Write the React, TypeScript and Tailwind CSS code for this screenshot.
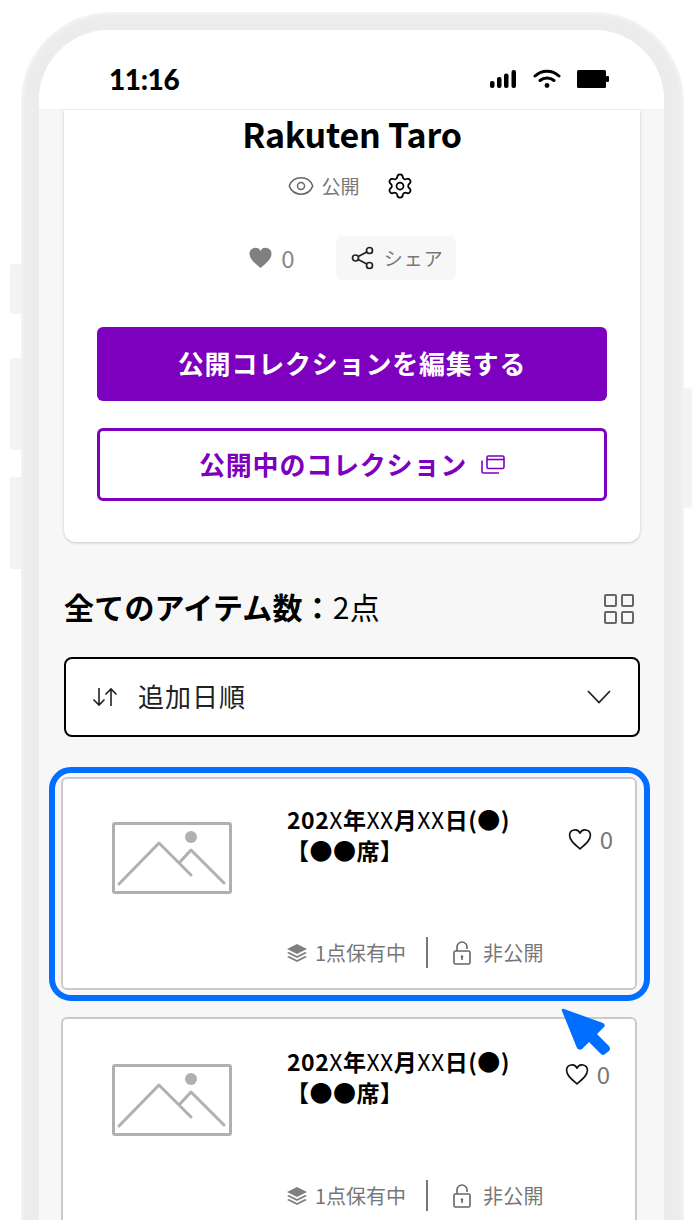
import { Eye, Settings } from "lucide-react";

const FONT = "font-['Noto_Sans_CJK_JP','Noto_Sans',sans-serif]";

const ImagePlaceholder = () => (
  <svg width="120" height="72" viewBox="0 0 120 72" fill="none" stroke="#b0b0b0" strokeWidth="3">
    <rect x="1.5" y="1.5" width="117" height="69" rx="1.5" />
    <path d="M7 62 L47 21 L79 53 M67 41 L79 28 L112 61" strokeLinecap="round" strokeLinejoin="round" />
    <circle cx="79" cy="15" r="6" fill="#b0b0b0" stroke="none" />
  </svg>
);

const StackIcon = () => (
  <svg width="20" height="18" viewBox="0 0 20 18" fill="#808080">
    <path d="M10 0 L20 5 L10 10 L0 5 Z" />
    <path d="M2 8 L10 12 L18 8 L20 9 L10 14 L0 9 Z" />
    <path d="M2 12 L10 16 L18 12 L20 13 L10 18 L0 13 Z" />
  </svg>
);

const LockIcon = () => (
  <svg width="18" height="24" viewBox="0 0 18 24" fill="none" stroke="#666" strokeWidth="1.6">
    <rect x="1" y="10" width="16" height="13" rx="1.5" />
    <path d="M4 10 V6 a5 5 0 0 1 10 0 V8" />
    <circle cx="9" cy="15.5" r="1.2" fill="#666" stroke="none" />
    <path d="M9 16 V19" />
  </svg>
);

const ItemTitle = () => (
  <p className="text-[23px] leading-[31px] font-bold text-black tracking-[0.5px]">
    202<span className="font-normal">X</span>年<span className="font-normal">XX</span>月
    <span className="font-normal">XX</span>日(●)
    <br />
    <span className="-ml-[1px]">【●●席】</span>
  </p>
);

const ItemCard = ({ second = false }: { second?: boolean }) => (
  <div className="h-[213px] rounded-[6px] border-2 border-[#cacaca] bg-white flex shrink-0">
    <div className={`w-[224px] pl-[49px] shrink-0 ${second ? "pt-[45px]" : "pt-[43px]"}`}>
      <ImagePlaceholder />
    </div>
    <div className={`flex-1 flex flex-col ${second ? "pt-[27px]" : "pt-[25px]"}`}>
      <div className="flex justify-between">
        <ItemTitle />
        <div className={`flex items-center gap-[7px] h-[28px] ${second ? "mr-[25px] mt-[14px]" : "mr-[22px] mt-[21px]"}`}>
          <svg width="26" height="25" viewBox="0 0 24 24" fill="none" stroke="#111" strokeWidth="1.6">
            <path d="M12 21 C6 16 2 12.5 2 8 a5.2 5.2 0 0 1 10 -2 a5.2 5.2 0 0 1 10 2 C22 12.5 18 16 12 21 Z" strokeLinejoin="round" />
          </svg>
          <span className="text-[24px] text-[#777]">0</span>
        </div>
      </div>
      <div className={`flex items-center text-[20px] text-[#777] ${second ? "mt-[72px]" : "mt-[71px]"}`}>
        <StackIcon />
        <span className="ml-[8px]">1点保有中</span>
        <span className="ml-[20px] w-[2px] h-[31px] bg-[#777]" />
        <span className="ml-[25px]">
          <LockIcon />
        </span>
        <span className="ml-[12px] tracking-[0.2px]">非公開</span>
      </div>
    </div>
  </div>
);

export default function App() {
  return (
    <div className={`${FONT} relative h-[1220px] w-[700px] overflow-hidden bg-white`}>
      {/* side buttons */}
      <div className="absolute left-[10px] top-[264px] h-[50px] w-[11px] rounded-l-[3px] bg-[#f3f3f3]" />
      <div className="absolute left-[10px] top-[358px] h-[92px] w-[11px] rounded-l-[3px] bg-[#f3f3f3]" />
      <div className="absolute left-[10px] top-[477px] h-[92px] w-[11px] rounded-l-[3px] bg-[#f3f3f3]" />
      <div className="absolute left-[684px] top-[388px] h-[120px] w-[8px] rounded-r-[3px] bg-[#f3f3f3]" />

      {/* phone */}
      <div className="ml-[21px] mt-[12px] w-[663px] h-[1300px] rounded-t-[90px] bg-[#ececec] shadow-[inset_0_0_6px_rgba(255,255,255,0.9)] pl-[18px] pr-[20px] pt-[18px]">
        <div className="h-full rounded-t-[70px] overflow-hidden bg-[#f7f7f7] flex flex-col">
          {/* status bar */}
          <div className="h-[80px] shrink-0 bg-white border-b border-[#f2f2f2] flex items-start justify-between pl-[70px] pr-[55px] pt-[35px]">
            <span className="font-['Lato',sans-serif] font-black text-[28px] leading-[28px] tracking-[-0.4px] text-black">11:16</span>
            <div className="flex items-center gap-[16px] pt-[4px]">
              <svg width="27" height="18" viewBox="0 0 27 18" fill="#000">
                <rect x="0" y="11" width="4.5" height="7" rx="2" />
                <rect x="7" y="7" width="4.5" height="11" rx="2" />
                <rect x="14" y="3.5" width="4.5" height="14.5" rx="2" />
                <rect x="21.5" y="0" width="4.5" height="18" rx="2" />
              </svg>
              <svg width="28" height="19" viewBox="0 0 28 19" fill="none" stroke="#000" strokeWidth="3" strokeLinecap="round">
                <path d="M2 7 C9 0.5 19 0.5 26 7" />
                <path d="M7 11.5 C11 8 17 8 21 11.5" />
                <circle cx="14" cy="16.5" r="2.4" fill="#000" stroke="none" />
              </svg>
              <svg width="32" height="18" viewBox="0 0 32 18" fill="#000">
                <rect x="0" y="0" width="29" height="18" rx="1.5" />
                <rect x="29" y="6" width="3" height="6" rx="1" />
              </svg>
            </div>
          </div>

          {/* content */}
          <div className="px-[25px] flex flex-col">
            <div className="w-[576px] h-[432px] shrink-0 bg-white rounded-b-[12px] shadow-[0_1px_3px_rgba(0,0,0,0.2)] flex flex-col items-center">
              <h1 className="text-[34px] leading-[48px] font-bold text-black tracking-[-0.2px]">Rakuten Taro</h1>
              <div className="flex items-center mt-[9px] -ml-[3px] h-[38px] text-[#777]">
                <Eye size={28} strokeWidth={1.3} className="text-[#666]" />
                <span className="ml-[6px] text-[19px]">公開</span>
                <Settings size={28} strokeWidth={1.5} className="ml-[26px] text-black" />
              </div>
              <div className="flex items-center mt-[31px] h-[44px]">
                <svg width="25" height="24" viewBox="0 0 24 24" fill="#808080">
                  <path d="M12 22 C6 17 1 13 1 7.5 a5.8 5.8 0 0 1 11 -2.5 a5.8 5.8 0 0 1 11 2.5 C23 13 18 17 12 22 Z" />
                </svg>
                <span className="ml-[8px] text-[24px] text-[#888]">0</span>
                <div className="ml-[41px] w-[120px] h-[44px] rounded-[6px] bg-[#f7f7f7] flex items-center pl-[15px]">
                  <svg width="23" height="24" viewBox="0 0 23 24" fill="none" stroke="#222" strokeWidth="1.7">
                    <circle cx="4.5" cy="12" r="3" />
                    <circle cx="18.5" cy="4.5" r="3" />
                    <circle cx="18.5" cy="19.5" r="3" />
                    <path d="M7.2 10.6 L15.8 6 M7.2 13.4 L15.8 18" />
                  </svg>
                  <span className="ml-[10px] text-[19px] tracking-[1px] text-[#777]">シェア</span>
                </div>
              </div>
              <button className="mt-[47px] w-[510px] h-[74px] pb-[3px] rounded-[6px] bg-[#7d00be] text-white text-[26px] font-bold tracking-[0.8px]">
                公開コレクションを編集する
              </button>
              <button className="mt-[27px] w-[510px] h-[73px] pb-[3px] rounded-[6px] border-[3px] border-[#7d00be] bg-white text-[#7d00be] text-[26px] font-bold tracking-[0.8px] flex items-center justify-center">
                公開中のコレクション
                <svg width="24" height="19" viewBox="0 0 24 19" fill="none" stroke="#7d00be" strokeWidth="1.6" className="ml-[14px] mt-[3px]">
                  <rect x="6" y="1" width="17" height="12.5" rx="1.5" />
                  <path d="M6 4.5 H23" />
                  <path d="M1 5.5 V16.5 a1.5 1.5 0 0 0 1.5 1.5 H18" />
                </svg>
              </button>
            </div>

            <div className="mt-[44px] h-[44px] flex items-center justify-between">
              <p className="text-[30px] text-black leading-[44px] tracking-[0.2px] whitespace-nowrap pb-[4px]">
                <span className="font-bold">全てのアイテム数：</span>2点
              </p>
              <div className="mr-[5px] mt-[2px] grid grid-cols-2 gap-[4px]">
                <div className="w-[13px] h-[13px] border-[2.5px] border-[#666] rounded-[2px]" />
                <div className="w-[13px] h-[13px] border-[2.5px] border-[#666] rounded-[2px]" />
                <div className="w-[13px] h-[13px] border-[2.5px] border-[#666] rounded-[2px]" />
                <div className="w-[13px] h-[13px] border-[2.5px] border-[#666] rounded-[2px]" />
              </div>
            </div>

            <div className="mt-[27px] h-[80px] w-[576px] rounded-[8px] border-2 border-black bg-white flex items-center pl-[26px] pr-[27px]">
              <svg width="26" height="20" viewBox="0 0 26 20" fill="none" stroke="#222" strokeWidth="1.6">
                <path d="M7 1 V18 M1.5 12.5 L7 18 L12.5 12.5" />
                <path d="M19 19 V2 M13.5 7.5 L19 2 L24.5 7.5" />
              </svg>
              <span className="ml-[20px] pb-[4px] text-[26px] text-[#222] tracking-[1px]">追加日順</span>
              <svg width="24" height="14" viewBox="0 0 24 14" fill="none" stroke="#222" strokeWidth="1.8" className="ml-auto">
                <path d="M1 1 L12 12.5 L23 1" />
              </svg>
            </div>

            <div className="relative mt-[40px] -ml-[3px] w-[576px] flex flex-col gap-[27px]">
              <ItemCard />
              <ItemCard second />

              {/* highlight + cursor */}
              <div className="absolute -left-[12px] -top-[10px] w-[601px] h-[234px] rounded-[22px] border-[6px] border-[#006eff]" />
              <svg className="absolute left-[500px] top-[231px]" width="50" height="50" viewBox="0 0 50 50" fill="#006eff">
                <path d="M1 3 Q0 0 3 1 L42 15 Q45 17 43 19 L36 26 L48 38 Q50 41 48 43 L44 46 Q42 48 40 46 L28 34 L21 41 Q18 43 16 40 Z" />
              </svg>
            </div>
          </div>
        </div>
      </div>
    </div>
  );
}
